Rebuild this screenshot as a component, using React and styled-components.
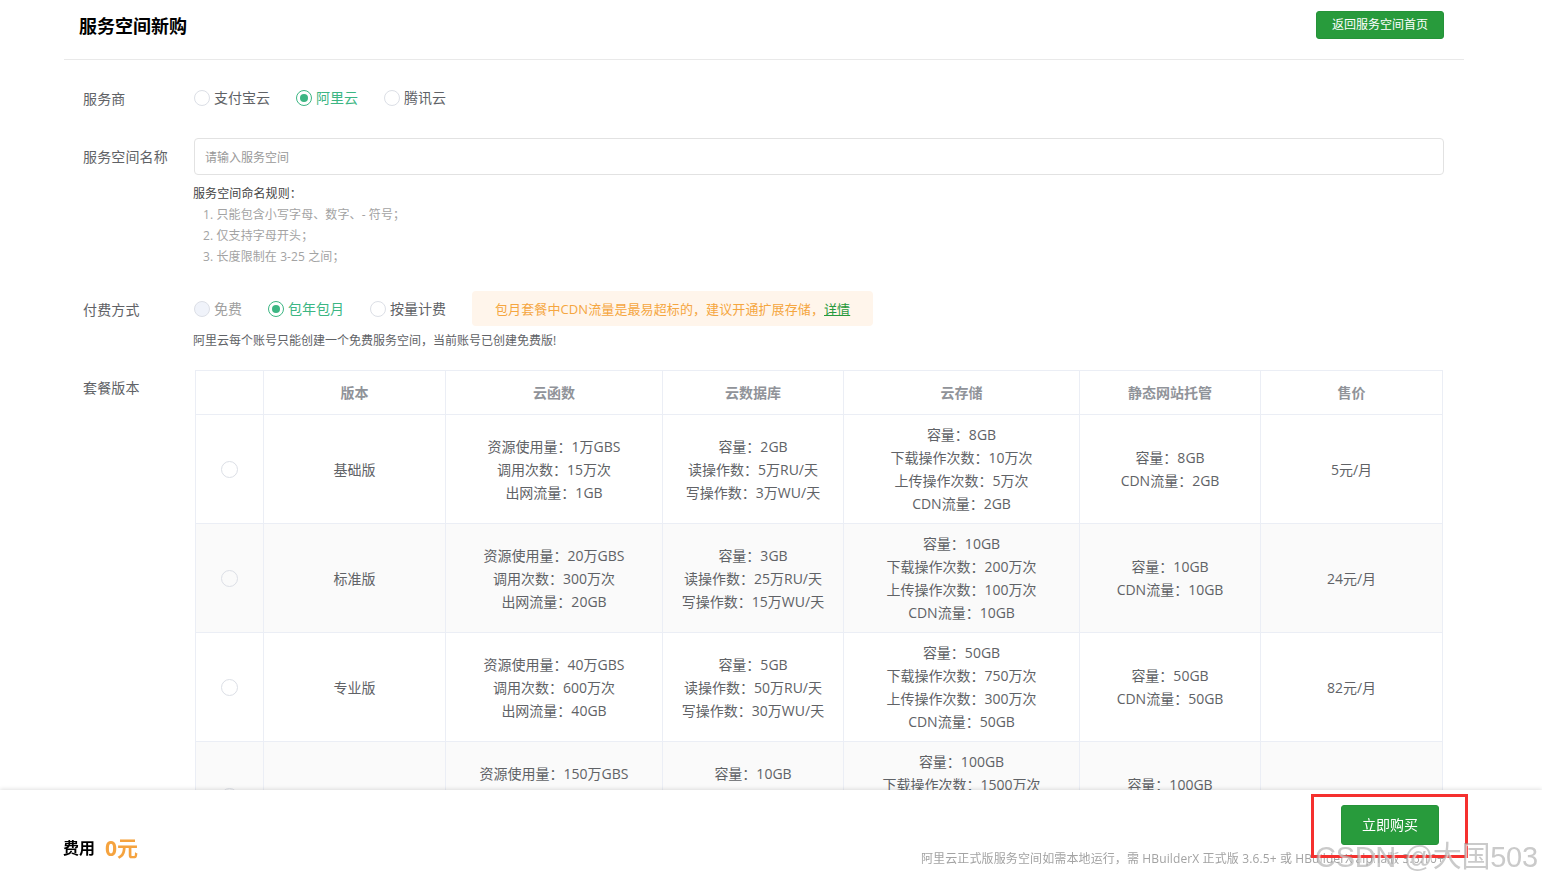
import React from 'react';
import styled, { createGlobalStyle } from 'styled-components';

const GlobalStyle = createGlobalStyle`
  html, body {
    margin: 0;
    height: 100%;
    overflow: hidden;
    background: #fff;
  }
  body {
    font-family: "Open Sans", "Noto Sans CJK SC", sans-serif;
    font-size: 14px;
    color: #606266;
  }
  * {
    box-sizing: border-box;
  }
`;

const Page = styled.div`
  width: 1400px;
  margin-left: 64px;
`;
const Header = styled.div`
  height: 60px;
  padding: 11px 20px 0 15px;
  border-bottom: 1px solid #e9e9e9;
  display: flex;
  justify-content: space-between;
  align-items: flex-start;
`;
const Title = styled.h1`
  margin: 0;
  font-size: 18px;
  line-height: 30px;
  font-weight: 700;
  color: #000;
`;
const Button = styled.button`
  width: ${p => p.$width}px;
  height: ${p => p.$height}px;
  padding: 0 0 2px;
  border: 1px solid #259339;
  border-radius: 3px;
  background: #289b3c;
  color: #fff;
  font: inherit;
  font-size: ${p => p.$size}px;
`;
const Form = styled.div`
  padding: 0 20px 0 19px;
`;
const Row = styled.div`
  display: flex;
  padding-top: ${p => p.$top}px;
`;
const Label = styled.div`
  width: 111px;
  flex: none;
  font-size: 14px;
  line-height: 20px;
  letter-spacing: 0.15px;
  padding-top: ${p => p.$top}px;
  color: #606266;
`;
const Content = styled.div`
  flex: 1;
  min-width: 0;
`;
const Radios = styled.div`
  display: flex;
  align-items: center;
  gap: 26px;
`;
const RadioItem = styled.label`
  display: flex;
  align-items: center;
  gap: 4px;
  line-height: 20px;
  color: ${p => (p.$checked ? '#3cb683' : p.$disabled ? '#a0a0a0' : '#606266')};
`;
const Radio = styled.span`
  width: 16px;
  height: 16px;
  flex: none;
  border-radius: 50%;
  border: 1px solid ${p => (p.$checked ? '#3cb683' : '#dcdfe6')};
  background: ${p => (p.$disabled ? '#f0f3fa' : '#fff')};
  display: flex;
  align-items: center;
  justify-content: center;
  &::after {
    content: '';
    display: ${p => (p.$checked ? 'block' : 'none')};
    width: 8px;
    height: 8px;
    border-radius: 50%;
    background: #3cb683;
  }
`;
const NameInput = styled.input`
  display: block;
  width: 100%;
  height: 37px;
  padding: 1px 10px 0;
  border: 1px solid #e2e2e2;
  border-radius: 4px;
  font: inherit;
  font-size: 12px;
  outline: none;
  &::placeholder {
    color: #999;
    opacity: 1;
  }
`;
const Rules = styled.div`
  margin-top: 8px;
  margin-left: -1px;
  font-size: 12px;
  line-height: 21px;
  letter-spacing: 0.1px;
`;
const RuleTitle = styled.div`
  color: #444;
`;
const RuleLine = styled.div`
  padding-left: 10px;
  color: #a3a3a3;
`;
const Tip = styled.div`
  height: 35px;
  padding: 0 23px;
  display: flex;
  align-items: center;
  border-radius: 4px;
  background: #fff5eb;
  color: #f5a640;
  font-size: 13px;
  letter-spacing: 0.1px;
`;
const TipLink = styled.a`
  color: #28993c;
  text-decoration: underline;
`;
const PayNote = styled.div`
  margin-top: 5px;
  margin-left: -1px;
  font-size: 12px;
  line-height: 20px;
  color: #606266;
`;
const PriceTable = styled.table`
  width: 1247px;
  margin-left: 1px;
  border-collapse: collapse;
  table-layout: fixed;
  th, td {
    border: 1px solid #ebeef5;
    padding: 0;
    text-align: center;
  }
  th {
    height: 44px;
    padding-bottom: 2px;
    font-weight: 700;
    color: #909399;
  }
  td {
    height: 109px;
    line-height: 23px;
  }
  tbody tr:nth-child(even) td {
    background: #fafafa;
  }
`;
const CellRadio = styled(Radio)`
  width: 17px;
  height: 17px;
  margin: 0 auto;
  background: transparent;
`;
const Footer = styled.div`
  position: fixed;
  left: 0;
  right: 0;
  bottom: 0;
  height: 92px;
  padding: 15px 98px 0 64px;
  background: #fff;
  box-shadow: 0 -1px 4px rgba(0, 0, 0, 0.12);
  display: flex;
  justify-content: space-between;
`;
const Cost = styled.div`
  display: flex;
  align-items: center;
  gap: 10px;
  height: 88px;
  margin-top: -15px;
  padding-top: 26px;
`;
const CostLabel = styled.span`
  font-size: 16px;
  font-weight: 700;
  color: #000;
  margin-left: -1px;
`;
const CostValue = styled.span`
  font-size: 21px;
  font-weight: 700;
  color: #f5a33f;
`;
const FooterRight = styled.div`
  display: flex;
  flex-direction: column;
  align-items: flex-end;
`;
const BuyButton = styled(Button)`
  margin-right: 5px;
`;
const FooterNote = styled.div`
  margin-top: 5px;
  font-size: 12px;
  line-height: 18px;
  letter-spacing: 0.12px;
  color: #a3a3a3;
`;
const Highlight = styled.div`
  position: fixed;
  left: 1311px;
  top: 794px;
  width: 157px;
  height: 64px;
  border: 3px solid #f5302e;
`;
const Watermark = styled.div`
  position: fixed;
  left: 1315px;
  bottom: 8px;
  font-family: "Liberation Sans", "Noto Sans CJK SC", sans-serif;
  font-size: 29px;
  line-height: 34px;
  letter-spacing: -0.3px;
  white-space: nowrap;
  color: rgba(150, 150, 150, 0.5);
  text-shadow: 1px 1px 1px rgba(255, 255, 255, 0.7);
`;

const columns = [
  { title: '', width: 68 },
  { title: '版本', width: 182 },
  { title: '云函数', width: 217 },
  { title: '云数据库', width: 181 },
  { title: '云存储', width: 236 },
  { title: '静态网站托管', width: 181 },
  { title: '售价', width: 182 }
];

const plans = [
  {
    name: '基础版',
    fn: ['资源使用量\uFF1A1万GBS', '调用次数\uFF1A15万次', '出网流量\uFF1A1GB'],
    db: ['容量\uFF1A2GB', '读操作数\uFF1A5万RU/天', '写操作数\uFF1A3万WU/天'],
    storage: ['容量\uFF1A8GB', '下载操作次数\uFF1A10万次', '上传操作次数\uFF1A5万次', 'CDN流量\uFF1A2GB'],
    site: ['容量\uFF1A8GB', 'CDN流量\uFF1A2GB'],
    price: '5元/月'
  },
  {
    name: '标准版',
    fn: ['资源使用量\uFF1A20万GBS', '调用次数\uFF1A300万次', '出网流量\uFF1A20GB'],
    db: ['容量\uFF1A3GB', '读操作数\uFF1A25万RU/天', '写操作数\uFF1A15万WU/天'],
    storage: ['容量\uFF1A10GB', '下载操作次数\uFF1A200万次', '上传操作次数\uFF1A100万次', 'CDN流量\uFF1A10GB'],
    site: ['容量\uFF1A10GB', 'CDN流量\uFF1A10GB'],
    price: '24元/月'
  },
  {
    name: '专业版',
    fn: ['资源使用量\uFF1A40万GBS', '调用次数\uFF1A600万次', '出网流量\uFF1A40GB'],
    db: ['容量\uFF1A5GB', '读操作数\uFF1A50万RU/天', '写操作数\uFF1A30万WU/天'],
    storage: ['容量\uFF1A50GB', '下载操作次数\uFF1A750万次', '上传操作次数\uFF1A300万次', 'CDN流量\uFF1A50GB'],
    site: ['容量\uFF1A50GB', 'CDN流量\uFF1A50GB'],
    price: '82元/月'
  },
  {
    name: '企业版',
    fn: ['资源使用量\uFF1A150万GBS', '调用次数\uFF1A1500万次', '出网流量\uFF1A100GB'],
    db: ['容量\uFF1A10GB', '读操作数\uFF1A100万RU/天', '写操作数\uFF1A60万WU/天'],
    storage: ['容量\uFF1A100GB', '下载操作次数\uFF1A1500万次', '上传操作次数\uFF1A600万次', 'CDN流量\uFF1A100GB'],
    site: ['容量\uFF1A100GB', 'CDN流量\uFF1A100GB'],
    price: '160元/月'
  }
];

function Lines({ items }) {
  return items.map(line => <div key={line}>{line}</div>);
}

function RadioOption({ label, checked, disabled }) {
  return (
    <RadioItem $checked={checked} $disabled={disabled}>
      <Radio $checked={checked} $disabled={disabled} />
      {label}
    </RadioItem>
  );
}

export default function App() {
  return (
    <>
      <GlobalStyle />
      <Page>
        <Header>
          <Title>服务空间新购</Title>
          <Button $width={128} $height={28} $size={12}>返回服务空间首页</Button>
        </Header>
        <Form>
          <Row $top={27}>
            <Label $top={2}>服务商</Label>
            <Radios>
              <RadioOption label="支付宝云" />
              <RadioOption label="阿里云" checked />
              <RadioOption label="腾讯云" />
            </Radios>
          </Row>
          <Row $top={29}>
            <Label $top={9}>服务空间名称</Label>
            <Content>
              <NameInput placeholder="请输入服务空间" />
              <Rules>
                <RuleTitle>{'服务空间命名规则\uFF1A'}</RuleTitle>
                <RuleLine>{'1. 只能包含小写字母、数字、- 符号\uFF1B'}</RuleLine>
                <RuleLine>{'2. 仅支持字母开头\uFF1B'}</RuleLine>
                <RuleLine>{'3. 长度限制在 3-25 之间\uFF1B'}</RuleLine>
              </Rules>
            </Content>
          </Row>
          <Row $top={24}>
            <Label $top={9}>付费方式</Label>
            <Content>
              <Radios>
                <RadioOption label="免费" disabled />
                <RadioOption label="包年包月" checked />
                <RadioOption label="按量计费" />
                <Tip>
                  {'包月套餐中CDN流量是最易超标的\uFF0C建议开通扩展存储\uFF0C'}
                  <TipLink>详情</TipLink>
                </Tip>
              </Radios>
              <PayNote>{'阿里云每个账号只能创建一个免费服务空间\uFF0C当前账号已创建免费版!'}</PayNote>
            </Content>
          </Row>
          <Row $top={19}>
            <Label $top={8}>套餐版本</Label>
            <Content>
              <PriceTable>
                <colgroup>
                  {columns.map(col => <col key={col.width + col.title} style={{ width: col.width }} />)}
                </colgroup>
                <thead>
                  <tr>
                    {columns.map(col => <th key={col.title}>{col.title}</th>)}
                  </tr>
                </thead>
                <tbody>
                  {plans.map(plan => (
                    <tr key={plan.name}>
                      <td><CellRadio /></td>
                      <td>{plan.name}</td>
                      <td><Lines items={plan.fn} /></td>
                      <td><Lines items={plan.db} /></td>
                      <td><Lines items={plan.storage} /></td>
                      <td><Lines items={plan.site} /></td>
                      <td>{plan.price}</td>
                    </tr>
                  ))}
                </tbody>
              </PriceTable>
            </Content>
          </Row>
        </Form>
      </Page>
      <Footer>
        <Cost>
          <CostLabel>费用</CostLabel>
          <CostValue>0元</CostValue>
        </Cost>
        <FooterRight>
          <BuyButton $width={98} $height={40} $size={14}>立即购买</BuyButton>
          <FooterNote>{'阿里云正式版服务空间如需本地运行\uFF0C需 HBuilderX 正式版 3.6.5+ 或 HBuilderX alpha版 3.6.10+'}</FooterNote>
        </FooterRight>
      </Footer>
      <Highlight />
      <Watermark>CSDN @大国503</Watermark>
    </>
  );
}
